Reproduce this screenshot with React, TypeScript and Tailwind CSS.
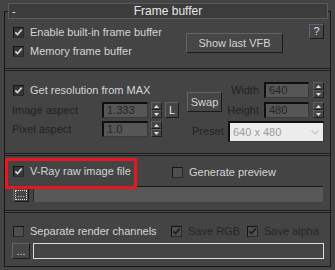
import React from 'react'

const btn =
  'flex items-center justify-center border border-t-[#646464] border-l-[#646464] border-b-[#1a1a1a] border-r-[#1a1a1a] bg-[#464646] text-[#d4d4d4]'

function Check({ on, disabled }: { on?: boolean; disabled?: boolean }) {
  const bg = on && !disabled ? 'bg-[#363636]' : 'bg-[#4e4e4e]'
  return (
    <span
      className={`flex h-[11px] w-[11px] shrink-0 items-center justify-center border border-t-[#141414] border-l-[#141414] border-b-[#2a2a2a] border-r-[#2a2a2a] ${bg}`}
    >
      {on && (
        <svg width="9" height="9" viewBox="0 0 9 9">
          <path
            d="M1.3 4.3 L3.5 6.6 L7.7 1.6"
            stroke={disabled ? '#1e1e1e' : '#d2d2d2'}
            strokeWidth="1.7"
            fill="none"
          />
        </svg>
      )}
    </span>
  )
}

function Row({ label, on, disabled }: { label: string; on?: boolean; disabled?: boolean }) {
  return (
    <div className="flex h-[13px] items-center gap-[6px]">
      <Check on={on} disabled={disabled} />
      <span className={`whitespace-nowrap ${disabled ? 'text-[#262626]' : 'text-[#d2d4d8]'}`}>{label}</span>
    </div>
  )
}

function Spinner({ className = '' }: { className?: string }) {
  const half =
    'flex h-[8px] w-[11px] items-center justify-center border border-t-[#606060] border-l-[#606060] border-b-[#1e1e1e] border-r-[#1e1e1e] bg-[#464646]'
  return (
    <div className={`flex flex-col ${className}`}>
      <div className={half}>
        <svg width="5" height="3" viewBox="0 0 5 3">
          <polygon points="2.5,0 5,3 0,3" fill="#e0e0e0" />
        </svg>
      </div>
      <div className={half}>
        <svg width="5" height="3" viewBox="0 0 5 3">
          <polygon points="0,0 5,0 2.5,3" fill="#e0e0e0" />
        </svg>
      </div>
    </div>
  )
}

function Field({ value, w }: { value: string; w: string }) {
  return (
    <div
      className={`flex h-[16px] ${w} items-center border-t-2 border-l-2 border-b border-r border-t-[#101010] border-l-[#101010] border-b-[#3a3a3a] border-r-[#3a3a3a] bg-[#565656] pl-[3px] text-[#262626]`}
    >
      {value}
    </div>
  )
}

function Separator() {
  return <div className="h-[3px] border-y border-[#1c1c1c] bg-[#4c4c4c]" />
}

export default function App() {
  return (
    <div className="h-[270px] w-[335px] overflow-hidden bg-[#444444] pl-[4px] pt-[11px] font-['Liberation_Sans',Arial,sans-serif] text-[11px] leading-[13px]">
      <div className="w-[327px] border border-[#181818]">
        <div className="-mt-[9px] ml-[3px] mr-[2px] grid h-[16px] grid-cols-[20px_1fr_20px] items-center border border-[#5a5a5a] bg-[#3c3c3c] text-[#e8e8e8]">
          <span className="pl-[3px]">-</span>
          <span className="text-center text-[12px]">Frame buffer</span>
          <span />
        </div>

        <div className="flex h-[49px]">
          <div className="flex w-[181px] flex-col gap-[6px] pl-[8px] pt-[7px]">
            <Row on label="Enable built-in frame buffer" />
            <Row on label="Memory frame buffer" />
          </div>
          <button className={`${btn} mt-[14px] h-[20px] w-[97px]`}>Show last VFB</button>
          <button className={`${btn} ml-[26px] mt-[5px] h-[15px] w-[15px] text-[#d8dcff]`}>?</button>
        </div>

        <Separator />

        <div className="flex h-[82px]">
          <div className="flex w-[181px] flex-col pt-[13px]">
            <div className="pl-[8px]">
              <Row on label="Get resolution from MAX" />
            </div>
            <div className="mt-[5px] flex h-[16px] items-center pl-[7px]">
              <span className="w-[90px] text-[#222222]">Image aspect</span>
              <Field value="1.333" w="w-[46px]" />
              <Spinner className="ml-[3px]" />
              <button className={`${btn} ml-[3px] h-[16px] w-[14px] text-[#dfe6ff]`}>L</button>
            </div>
            <div className="mt-[3px] flex h-[16px] items-center pl-[7px]">
              <span className="w-[90px] text-[#222222]">Pixel aspect</span>
              <Field value="1.0" w="w-[46px]" />
              <Spinner className="ml-[3px]" />
            </div>
          </div>
          <div className="flex flex-col pt-[11px]">
            <div className="flex">
              <button className={`${btn} ml-[1px] mt-[10px] h-[20px] w-[35px]`}>Swap</button>
              <div className="flex flex-col gap-[4px]">
                <div className="flex h-[16px] items-center">
                  <span className="w-[42px] pr-[5px] text-right text-[#222222]">Width</span>
                  <Field value="640" w="w-[45px]" />
                  <Spinner className="ml-[4px]" />
                </div>
                <div className="flex h-[16px] items-center">
                  <span className="w-[42px] pr-[5px] text-right text-[#222222]">Height</span>
                  <Field value="480" w="w-[45px]" />
                  <Spinner className="ml-[4px]" />
                </div>
              </div>
            </div>
            <div className="mt-[3px] flex items-center pl-[6px]">
              <span className="w-[36px] text-[#222222]">Preset</span>
              <div className="flex h-[21px] w-[96px] items-center justify-between border-t-2 border-l-2 border-b border-r border-t-[#101010] border-l-[#101010] border-b-[#3a3a3a] border-r-[#3a3a3a] bg-[#ececec] pl-[3px] pr-[4px] text-[#9c9c9c]">
                <span>640 x 480</span>
                <svg width="8" height="5" viewBox="0 0 8 5">
                  <path d="M0.5 0.5 L4 4 L7.5 0.5" stroke="#c4c4c4" strokeWidth="1.2" fill="none" />
                </svg>
              </div>
            </div>
          </div>
        </div>

        <Separator />

        <div className="relative h-[54px]">
          <div className="flex pt-[9px]">
            <div className="w-[167px] pl-[8px]">
              <Row on label="V-Ray raw image file" />
            </div>
            <div className="mt-[1px]">
              <Row label="Generate preview" />
            </div>
          </div>
          <div className="mt-[7px] flex items-start pl-[8px]">
            <button className={`${btn} mt-[2px] h-[14px] w-[16px]`}>
              <span className="flex h-[10px] w-[12px] items-end justify-center border border-dotted border-[#e0e0e0] text-[9px] leading-[9px]">
                ...
              </span>
            </button>
            <div className="ml-[4px] h-[16px] w-[290px] border-t border-l border-t-[#1a1a1a] border-l-[#2a2a2a] bg-[#575757]" />
          </div>
          <div className="absolute left-0 top-[2px] h-[31px] w-[132px] border-[3px] border-[#e8161e]" />
        </div>

        <Separator />

        <div className="h-[53px]">
          <div className="flex pt-[12px]">
            <div className="w-[166px] pl-[8px]">
              <Row label="Separate render channels" />
            </div>
            <div className="w-[76px]">
              <Row on disabled label="Save RGB" />
            </div>
            <Row on disabled label="Save alpha" />
          </div>
          <div className="mt-[5px] flex pl-[7px]">
            <button className={`${btn} h-[16px] w-[18px] leading-[10px]`}>...</button>
            <div className="ml-[3px] h-[16px] w-[291px] border border-[#dcdcdc]" />
          </div>
        </div>
      </div>
    </div>
  )
}
